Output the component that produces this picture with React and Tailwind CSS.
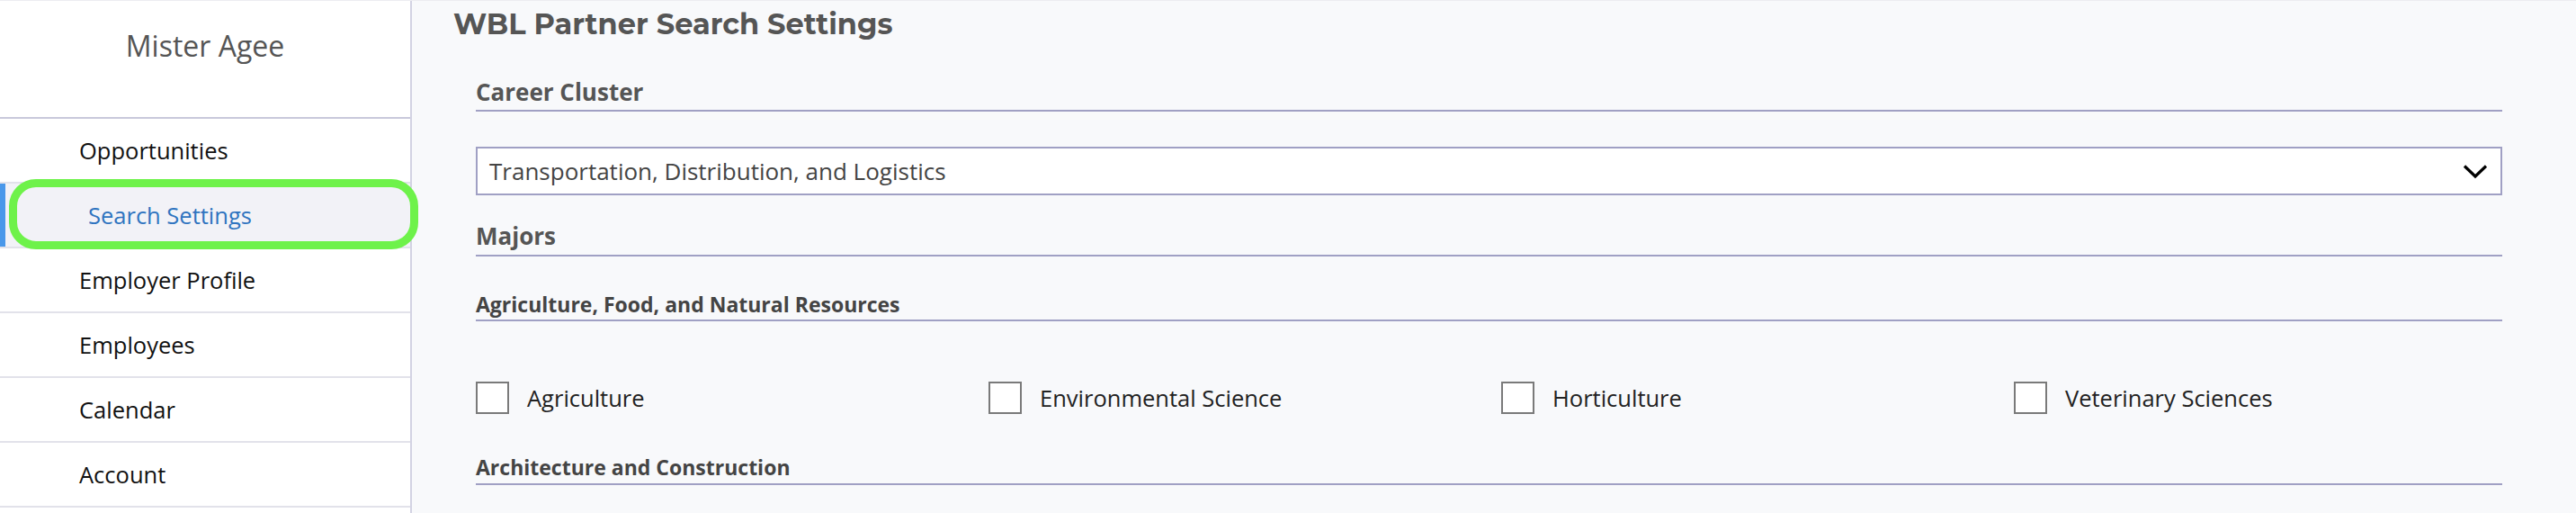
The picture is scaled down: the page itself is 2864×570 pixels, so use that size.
const navItems = ['Opportunities', 'Search Settings', 'Employer Profile', 'Employees', 'Calendar', 'Account'];

const agriculture = ['Agriculture', 'Environmental Science', 'Horticulture', 'Veterinary Sciences'];

function Checkbox({ label }) {
  return (
    <label className="flex items-center gap-[20px]">
      <span className="w-[37px] h-[36px] border-2 border-[#7a7a7a] bg-white shrink-0" />
      <span className="text-[25.5px] text-[#222]">{label}</span>
    </label>
  );
}

export default function App() {
  return (
    <div
      className="flex h-[570px] w-[2864px] overflow-hidden border-t border-[#ececf1]"
      style={{ fontFamily: '"Open Sans", "Liberation Sans", sans-serif' }}
    >
      {/* Sidebar */}
      <aside className="w-[458px] shrink-0 bg-white border-r-2 border-[#d3d3e3] flex flex-col">
        <div className="h-[131px] border-b-2 border-[#c9c9db] pt-[28px] text-center">
          <div className="text-[32px] leading-[44px] text-[#555]">Mister Agee</div>
        </div>
        <nav className="relative">
          {navItems.map((item) => {
            const active = item === 'Search Settings';
            return (
              <div
                key={item}
                className={
                  active
                    ? 'relative h-[72px] flex items-center pl-[98px] bg-[#f2f2f7] border-b-2 border-[#e2e2ea] text-[25.5px] text-[#2f74c0]'
                    : 'h-[72px] flex items-center pl-[88px] border-b-2 border-[#e2e2ea] text-[25.5px] text-[#111]'
                }
              >
                {active && <span className="absolute left-0 top-0 bottom-0 w-[6px] bg-[#4a98ea]" />}
                {item}
              </div>
            );
          })}
          {/* highlight annotation */}
          <div className="absolute left-[10px] top-[67px] w-[455px] h-[78px] rounded-[30px] border-[9px] border-[#6ef24a] pointer-events-none" />
        </nav>
      </aside>

      {/* Main */}
      <main className="flex-1 min-w-0 bg-[#f8f9fb] pl-[46px] pr-[82px] pt-[6px]">
        <h1
          className="text-[32px] leading-[40px] font-bold text-[#555]"
          style={{ fontFamily: 'Montserrat, Inter, "Liberation Sans", sans-serif' }}
        >
          WBL Partner Search Settings
        </h1>

        <div className="pl-[25px]">
          <div className="mt-[38px] text-[26px] leading-[34px] font-bold text-[#555] pb-[3px] border-b-2 border-[#a0a0c4]">
            Career Cluster
          </div>

          <div className="mt-[39px] h-[54px] bg-white border-2 border-[#a0a0c4] flex items-center justify-between pl-[13px] pr-[14px]">
            <span className="text-[26px] text-[#444]">Transportation, Distribution, and Logistics</span>
            <svg width="28" height="17" viewBox="0 0 28 17" fill="none">
              <polyline points="2,2.5 14,14 26,2.5" stroke="#000" strokeWidth="3.2" />
            </svg>
          </div>

          <div className="mt-[28px] text-[26px] leading-[34px] font-bold text-[#555] pb-[4px] border-b-2 border-[#a0a0c4]">
            Majors
          </div>

          <div className="mt-[38px] text-[23px] leading-[30px] font-bold text-[#444] pb-[2px] border-b-2 border-[#a0a0c4]">
            Agriculture, Food, and Natural Resources
          </div>

          <div className="mt-[66px] grid grid-cols-[repeat(4,570px)]">
            {agriculture.map((m) => (
              <Checkbox key={m} label={m} />
            ))}
          </div>

          <div className="mt-[43px] text-[23px] leading-[30px] font-bold text-[#444] pb-[3px] border-b-2 border-[#a0a0c4]">
            Architecture and Construction
          </div>
        </div>
      </main>
    </div>
  );
}
